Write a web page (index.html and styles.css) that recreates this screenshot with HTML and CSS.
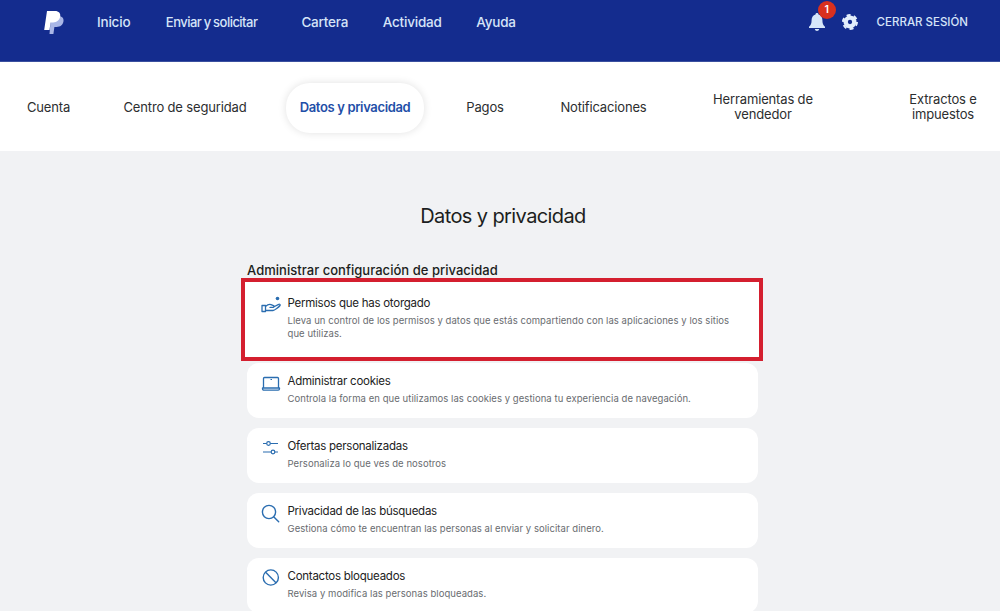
FILE: index.html
```html
<!DOCTYPE html>
<html lang="es">
<head>
  <meta charset="UTF-8" />
  <title>Datos y privacidad</title>
  <link rel="stylesheet" href="styles.css">
</head>
<body>

  <!-- Top bar -->
  <header class="topbar">
    <svg class="logo" viewBox="0 0 20 24" width="20" height="24">
      <path d="M7 5h7.500c3.500 0 5.500 2.300 5 5.300-.6 3.700-3.300 5.700-6.800 5.700h-2.300l-1 7H5.500z" fill="#a9b6e6"/>
      <path d="M3 0h8c3.800 0 5.800 2.300 5.200 5.600-.7 3.700-3.500 5.900-7 5.900H6.600l-1.100 7.500H.2z" fill="#fff"/>
    </svg>
    <nav class="mainnav">
      <a href="#">Inicio</a>
      <a href="#" class="wide">Enviar y solicitar</a>
      <a href="#">Cartera</a>
      <a href="#">Actividad</a>
      <a href="#">Ayuda</a>
    </nav>
    <div class="actions">
      <div class="bell">
        <svg viewBox="0 0 16 18" width="16" height="18">
          <path d="M8 0c.9 0 1.500.6 1.500 1.400C12 2.100 13.400 4.300 13.400 7c0 3.300.7 5 2.600 6.800V15H0v-1.200C1.900 12 2.600 10.300 2.600 7c0-2.700 1.400-4.900 3.900-5.600C6.500.6 7.100 0 8 0z" fill="#d6e6fa"/>
          <path d="M5.800 16h4.400c-.2 1.200-1.100 2-2.200 2s-2-.8-2.200-2z" fill="#d6e6fa"/>
        </svg>
        <span class="badge">1</span>
      </div>
      <svg class="gear" viewBox="0 0 24 24" width="16" height="16">
        <circle cx="12" cy="12" r="6.500" fill="none" stroke="#e3eefc" stroke-width="6.500"/>
        <circle cx="12" cy="12" r="10.500" fill="none" stroke="#e3eefc" stroke-width="3" stroke-dasharray="6 5"/>
      </svg>
      <a href="#" class="logout">CERRAR SESIÓN</a>
    </div>
  </header>

  <!-- Settings tabs -->
  <nav class="tabs">
    <a href="#">Cuenta</a>
    <a href="#">Centro de seguridad</a>
    <a href="#" class="active">Datos y privacidad</a>
    <a href="#">Pagos</a>
    <a href="#">Notificaciones</a>
    <a href="#" class="narrow">Herramientas de vendedor</a>
    <a href="#" class="last">Extractos e impuestos</a>
  </nav>

  <main class="content">
    <h1>Datos y privacidad</h1>

    <section class="panel">
      <h2>Administrar configuración de privacidad</h2>

      <div class="highlight">
        <a href="#" class="card">
          <svg class="icon" viewBox="0 0 20 18" width="20" height="18">
            <path d="M1 9.500h3.500v6H1zM4.500 10.500c2-1.800 3.600-2.500 5.500-1.800l2.500 1c.9.400.6 1.800-.5 1.700H9M4.500 14.500h7.500c1.500 0 6-3.600 7-5 .5-.9-.4-1.700-1.300-1.200L12.500 11" fill="none" stroke="#2a6db0" stroke-width="1.300" stroke-linejoin="round" stroke-linecap="round"/>
            <circle cx="16.500" cy="2.500" r="1.800" fill="#2a6db0"/>
          </svg>
          <div class="card-text">
            <h3>Permisos que has otorgado</h3>
            <p>Lleva un control de los permisos y datos que estás compartiendo con las aplicaciones y los sitios que utilizas.</p>
          </div>
        </a>
      </div>

      <a href="#" class="card">
        <svg class="icon" viewBox="0 0 20 18" width="20" height="18">
          <path d="M3.500 3.500h13c.6 0 1 .4 1 1v9.500h-15V4.500c0-.6.400-1 1-1zM1.500 14h17v.8c0 .8-.6 1.300-1.300 1.300H2.800c-.7 0-1.300-.5-1.300-1.300z" fill="none" stroke="#2a6db0" stroke-width="1.300" stroke-linejoin="round"/>
          <path d="M9.500 5.500h1.500" fill="none" stroke="#2a6db0" stroke-width="1"/>
        </svg>
        <div class="card-text">
          <h3>Administrar cookies</h3>
          <p>Controla la forma en que utilizamos las cookies y gestiona tu experiencia de navegación.</p>
        </div>
      </a>

      <a href="#" class="card">
        <svg class="icon" viewBox="0 0 20 18" width="20" height="18">
          <path d="M2 4.500h3.700M9.300 4.500H17M2 13h8M14 13h3" fill="none" stroke="#2a6db0" stroke-width="1.200"/>
          <circle cx="7.500" cy="4.500" r="1.800" fill="none" stroke="#2a6db0" stroke-width="1.200"/>
          <circle cx="12" cy="13" r="1.800" fill="none" stroke="#2a6db0" stroke-width="1.200"/>
        </svg>
        <div class="card-text">
          <h3>Ofertas personalizadas</h3>
          <p>Personaliza lo que ves de nosotros</p>
        </div>
      </a>

      <a href="#" class="card">
        <svg class="icon" viewBox="0 0 20 20" width="20" height="20">
          <circle cx="8" cy="8" r="6.600" fill="none" stroke="#2a6db0" stroke-width="1.400"/>
          <path d="M12.900 12.900l4.800 4.800" fill="none" stroke="#2a6db0" stroke-width="1.400" stroke-linecap="round"/>
        </svg>
        <div class="card-text">
          <h3>Privacidad de las búsquedas</h3>
          <p>Gestiona cómo te encuentran las personas al enviar y solicitar dinero.</p>
        </div>
      </a>

      <a href="#" class="card">
        <svg class="icon" viewBox="0 0 20 20" width="20" height="20">
          <circle cx="9.800" cy="8.500" r="7.600" fill="none" stroke="#2a6db0" stroke-width="1.400"/>
          <path d="M4.400 3.100l10.800 10.800" fill="none" stroke="#2a6db0" stroke-width="1.400"/>
        </svg>
        <div class="card-text">
          <h3>Contactos bloqueados</h3>
          <p>Revisa y modifica las personas bloqueadas.</p>
        </div>
      </a>
    </section>
  </main>

</body>
</html>
```

FILE: styles.css
```css
* {
  box-sizing: border-box;
  font-family: 'Inter', sans-serif;
}

html,
body {
  height: 100%;
}

body {
  margin: 0;
  background-color: #f1f2f4;
  overflow: hidden;
}

a {
  text-decoration: none;
}

.topbar {
  display: flex;
  align-items: flex-start;
  height: 62px;
  padding: 11px 32px 0 44px;
  background-color: #142c8e;
  border-bottom: 1px solid #3a4f9f;
}

.logo {
  flex-shrink: 0;
}

.mainnav {
  display: flex;
  gap: 34.500px;
  margin-left: 33px;
  padding-top: 2px;
}

.mainnav a {
  color: #d6e4f8;
  font-size: 13.5px;
  font-weight: 500;
  line-height: 18px;
  letter-spacing: -0.2px;
}

.mainnav .wide {
  margin-left: 1px;
  margin-right: 9.500px;
  font-size: 13px;
  letter-spacing: -0.53px;
  word-spacing: -0.5px;
}

.actions {
  display: flex;
  align-items: center;
  margin-left: auto;
  padding-top: 2px;
}

.bell {
  position: relative;
  display: flex;
  margin-right: 17px;
}

.badge {
  position: absolute;
  top: -12px;
  left: 9px;
  width: 18px;
  height: 18px;
  border-radius: 50%;
  background-color: #d9301f;
  color: #fff;
  font-size: 10.5px;
  font-weight: 600;
  line-height: 18px;
  text-align: center;
}

.logout {
  margin-left: 19px;
  color: #d6e4f8;
  font-size: 11.5px;
  font-weight: 500;
}

.tabs {
  display: grid;
  grid-template-columns: 97px 176px 164px 96px 141px 178px 148px;
  align-items: center;
  height: 89px;
  padding-top: 2px;
  background-color: white;
}

.tabs a {
  color: #2c2e2f;
  font-size: 13px;
  line-height: 15px;
  letter-spacing: -0.15px;
  text-align: center;
}

.tabs .active {
  justify-self: center;
  padding: 17.500px 14px;
  border-radius: 24px;
  box-shadow: 0 0 8px rgba(0, 0, 0, 0.12);
  color: #1f4fa8;
  font-weight: 600;
  letter-spacing: -0.35px;
  white-space: nowrap;
}

.tabs .narrow {
  justify-self: center;
  width: 110px;
  margin-bottom: 2px;
}

.tabs .last {
  justify-self: end;
  width: 70px;
  margin-right: 22px;
  margin-bottom: 2px;
}

.content {
  padding-top: 53px;
}

h1 {
  margin: 0 0 34px 6px;
  color: #1c1e20;
  font-size: 20px;
  font-weight: 400;
  line-height: 24px;
  letter-spacing: -0.6px;
  text-align: center;
}

.panel {
  display: flex;
  flex-direction: column;
  gap: 10px;
  width: 511px;
  margin-left: 247px;
}

h2 {
  margin: 0 0 -11px 0;
  color: #1c1e20;
  font-size: 13px;
  font-weight: 500;
  line-height: 17px;
  letter-spacing: 0.03px;
}

.highlight {
  margin: 0 -5px -8px -6px;
  padding: 3px 2px 7px;
  background-color: white;
  border: 4px solid #d41f2f;
}

.card {
  display: flex;
  gap: 6.500px;
  flex-shrink: 0;
  min-height: 55px;
  padding: 10px 14px;
  background-color: white;
  border-radius: 12px;
}

.icon {
  flex-shrink: 0;
  margin-top: 1px;
}

.card-text {
  min-width: 0;
}

h3 {
  margin: 0 0 3px 0;
  color: #222;
  font-size: 11.5px;
  font-weight: 400;
  line-height: 16px;
  letter-spacing: -0.25px;
}

p {
  margin: 0;
  color: #696c70;
  font-size: 9.5px;
  line-height: 13px;
  letter-spacing: 0.06px;
}
```
